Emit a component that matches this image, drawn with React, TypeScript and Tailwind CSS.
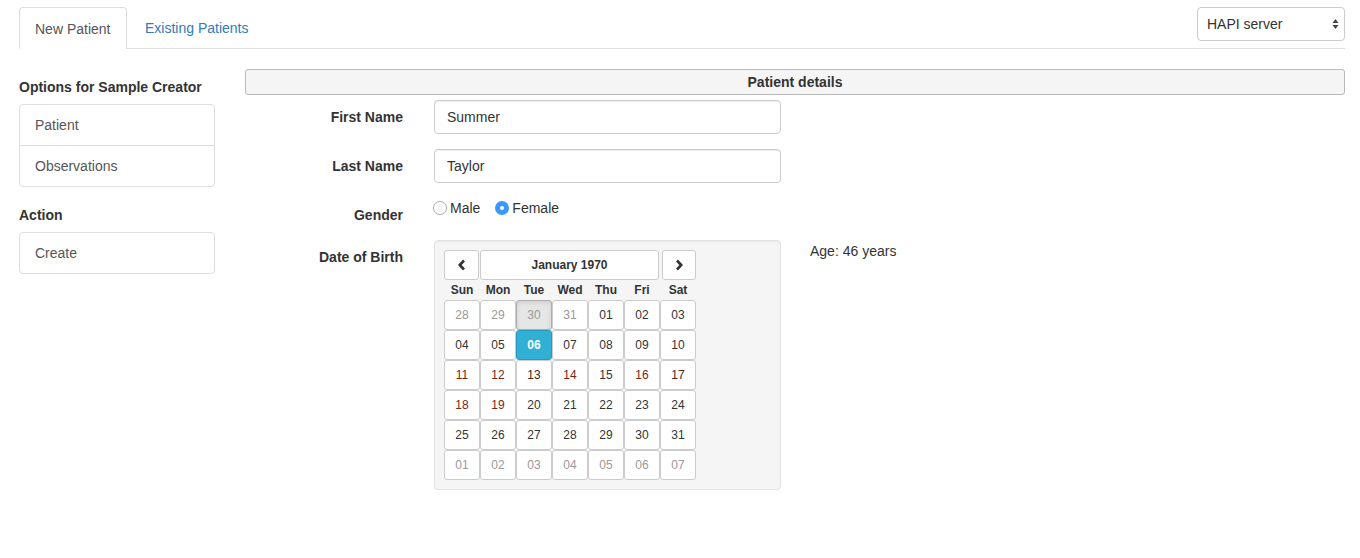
import React from 'react';

type Day = { n: string; muted?: boolean; tint?: string; today?: boolean; active?: boolean };

const weeks: Day[][] = [
  [
    { n: '28', muted: true },
    { n: '29', muted: true },
    { n: '30', muted: true, today: true },
    { n: '31', muted: true },
    { n: '01' },
    { n: '02' },
    { n: '03' },
  ],
  [{ n: '04' }, { n: '05' }, { n: '06', active: true }, { n: '07' }, { n: '08' }, { n: '09' }, { n: '10' }],
  [
    { n: '11', tint: 'red' },
    { n: '12', tint: 'red' },
    { n: '13', tint: 'brown' },
    { n: '14', tint: 'red' },
    { n: '15' },
    { n: '16', tint: 'red' },
    { n: '17', tint: 'brown' },
  ],
  [{ n: '18', tint: 'red' }, { n: '19', tint: 'red' }, { n: '20' }, { n: '21' }, { n: '22' }, { n: '23' }, { n: '24' }],
  [{ n: '25' }, { n: '26' }, { n: '27' }, { n: '28' }, { n: '29' }, { n: '30' }, { n: '31' }],
  [
    { n: '01', muted: true },
    { n: '02', muted: true },
    { n: '03', muted: true },
    { n: '04', muted: true },
    { n: '05', muted: true },
    { n: '06', muted: true },
    { n: '07', muted: true },
  ],
];

const dayNames = ['Sun', 'Mon', 'Tue', 'Wed', 'Thu', 'Fri', 'Sat'];

function DayCell({ d }: { d: Day }) {
  let cls = 'border-[#ccc] bg-white text-[#333]';
  if (d.muted) cls = 'border-[#ccc] bg-white text-[#999]';
  if (d.tint === 'red') cls = 'border-[#ccc] bg-white text-[#7a2616]';
  if (d.tint === 'brown') cls = 'border-[#ccc] bg-white text-[#4a2419]';
  if (d.today) cls = 'border-[#adadad] bg-[#e6e6e6] text-[#999] shadow-[inset_0_2px_4px_rgba(0,0,0,0.1)]';
  if (d.active) cls = 'border-[#269abc] bg-[#31b0d5] text-white font-bold';
  return (
    <div className={`flex h-[30px] w-[36px] items-center justify-center rounded-[3px] border text-[12px] ${cls}`}>
      {d.n}
    </div>
  );
}

function Radio({ checked }: { checked?: boolean }) {
  if (checked) {
    return (
      <span className="mr-[3px] inline-flex h-[14px] w-[14px] items-center justify-center rounded-full bg-[#3b99fc]">
        <span className="h-[4px] w-[4px] rounded-full bg-white" />
      </span>
    );
  }
  return <span className="mr-[3px] inline-block h-[14px] w-[14px] rounded-full border border-[#a9a9a9] bg-white" />;
}

function Calendar() {
  return (
    <div className="w-[347px] rounded-[4px] border border-[#e3e3e3] bg-[#f5f5f5] p-[9px] shadow-[inset_0_1px_1px_rgba(0,0,0,0.05)]">
      <div className="flex h-[30px] items-start">
        <button className="flex h-[30px] w-[35px] items-center justify-center rounded-[3px] border border-[#ccc] bg-white text-[#333]">
          <svg width="10" height="12" viewBox="0 0 10 12">
            <path d="M7 1.5 L2.8 6 L7 10.5" fill="none" stroke="#333" strokeWidth="2.6" />
          </svg>
        </button>
        <button className="ml-[1px] flex h-[30px] w-[179px] items-center justify-center rounded-[3px] border border-[#ccc] bg-white text-[12px] font-bold text-[#333]">
          January 1970
        </button>
        <button className="ml-[3px] flex h-[30px] w-[34px] items-center justify-center rounded-[3px] border border-[#ccc] bg-white text-[#333]">
          <svg width="10" height="12" viewBox="0 0 10 12">
            <path d="M3 1.5 L7.2 6 L3 10.5" fill="none" stroke="#333" strokeWidth="2.6" />
          </svg>
        </button>
      </div>
      <div className="flex h-[20px] items-center">
        {dayNames.map((n) => (
          <div key={n} className="w-[36px] text-center text-[12px] font-bold text-[#333]">
            {n}
          </div>
        ))}
      </div>
      <div className="flex flex-col">
        {weeks.map((w, i) => (
          <div key={i} className="flex">
            {w.map((d, j) => (
              <DayCell key={j} d={d} />
            ))}
          </div>
        ))}
      </div>
    </div>
  );
}

function FormRow({ label, children }: { label: string; children: React.ReactNode }) {
  return (
    <div className="mb-[15px] flex">
      <div className="w-[158px] shrink-0 pt-[7px] text-right text-[14px] font-bold leading-[20px]">{label}</div>
      <div className="ml-[31px] w-[347px] shrink-0">{children}</div>
    </div>
  );
}

export default function App() {
  return (
    <div className="min-h-[558px] bg-white font-['Liberation_Sans',Arial,sans-serif] text-[14px] leading-[20px] text-[#333]">
      <div className="px-[19px] pr-[15px] pt-[7px]">
        <div className="flex items-start justify-between border-b border-[#ddd]">
          <div className="flex">
            <div className="-mb-px w-[108px] rounded-t-[4px] border border-[#ddd] border-b-white bg-white px-[15px] pb-[9px] pt-[11px] text-[#555]">
              New Patient
            </div>
            <div className="ml-[2px] px-[16px] pb-[9px] pt-[11px] text-[#337ab7]">Existing Patients</div>
          </div>
          <div className="flex h-[34px] w-[148px] items-center justify-between rounded-[4px] border border-[#ccc] bg-white pl-[9px] pr-[5px] text-[14px] text-[#333]">
            <span>HAPI server</span>
            <svg width="7" height="12" viewBox="0 0 7 12">
              <path d="M3.5 1 L6.5 5 L0.5 5 Z" fill="#444" />
              <path d="M3.5 11 L6.5 7 L0.5 7 Z" fill="#444" />
            </svg>
          </div>
        </div>

        <div className="mt-[20px] flex">
          <div className="w-[196px] shrink-0 pt-[8px]">
            <div className="mb-[7px] font-bold">Options for Sample Creator</div>
            <div className="rounded-[4px] border border-[#ddd]">
              <div className="border-b border-[#ddd] px-[15px] py-[10px] text-[#555]">Patient</div>
              <div className="px-[15px] py-[10px] text-[#555]">Observations</div>
            </div>
            <div className="mb-[7px] mt-[18px] font-bold">Action</div>
            <div className="rounded-[4px] border border-[#ddd] px-[15px] py-[10px] text-[#555]">Create</div>
          </div>

          <div className="ml-[30px] flex-1">
            <div className="mb-[5px] h-[26px] rounded-[3px] border border-[#bbb] bg-[#f5f5f5] text-center font-bold leading-[24px]">
              Patient details
            </div>
            <FormRow label="First Name">
              <div className="flex h-[34px] items-center rounded-[4px] border border-[#ccc] px-[12px] shadow-[inset_0_1px_1px_rgba(0,0,0,0.075)]">
                Summer
              </div>
            </FormRow>
            <FormRow label="Last Name">
              <div className="flex h-[34px] items-center rounded-[4px] border border-[#ccc] px-[12px] shadow-[inset_0_1px_1px_rgba(0,0,0,0.075)]">
                Taylor
              </div>
            </FormRow>
            <div className="mb-[15px] flex">
              <div className="w-[158px] shrink-0 pt-[7px] text-right font-bold">Gender</div>
              <div className="ml-[30px] flex h-[20px] items-center">
                <Radio />
                <span>Male</span>
                <span className="ml-[15px] flex items-center">
                  <Radio checked />
                  <span>Female</span>
                </span>
              </div>
            </div>
            <div className="flex">
              <div className="w-[158px] shrink-0 pt-[7px] text-right font-bold">Date of Birth</div>
              <div className="ml-[31px] shrink-0">
                <Calendar />
              </div>
              <div className="ml-[29px] pt-[1px]">Age: 46 years</div>
            </div>
          </div>
        </div>
      </div>
    </div>
  );
}
